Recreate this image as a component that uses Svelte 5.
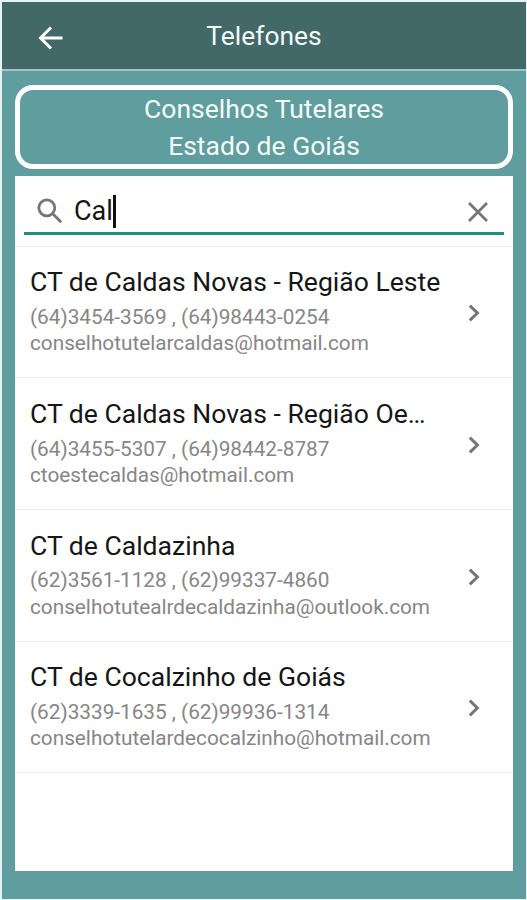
<script lang="ts">
  let query = $state('Cal');

  const contacts = [
    { name: 'CT de Caldas Novas - Região Leste', phones: '(64)3454-3569 , (64)98443-0254', email: 'conselhotutelarcaldas@hotmail.com' },
    { name: 'CT de Caldas Novas - Região Oe…', phones: '(64)3455-5307 , (64)98442-8787', email: 'ctoestecaldas@hotmail.com' },
    { name: 'CT de Caldazinha', phones: '(62)3561-1128 , (62)99337-4860', email: 'conselhotutealrdecaldazinha@outlook.com' },
    { name: 'CT de Cocalzinho de Goiás', phones: '(62)3339-1635 , (62)99936-1314', email: 'conselhotutelardecocalzinho@hotmail.com' },
  ];

  const shown = $derived(contacts.filter((c) => c.name.toLowerCase().includes(query.toLowerCase())));
</script>

<div class="screen">
  <header class="bar">
    <button class="back" aria-label="Voltar">
      <svg width="26" height="26" viewBox="0 0 26 26">
        <path d="M24.5 13H3M13 2.5 2.5 13 13 23.5" />
      </svg>
    </button>
    <h1>Telefones</h1>
  </header>

  <main>
    <div class="banner">
      <div>Conselhos Tutelares</div>
      <div>Estado de Goiás</div>
    </div>

    <section class="panel">
      <div class="search">
        <div class="field">
          <svg class="lens" width="26" height="26" viewBox="0 0 26 26">
            <circle cx="9.8" cy="9.8" r="8" />
            <path d="m15.5 15.5 8.7 8.7" />
          </svg>
          <span class="query">{query}</span>
          <span class="caret"></span>
          <button class="clear" aria-label="Limpar" onclick={() => (query = '')}>
            <svg width="20" height="20" viewBox="0 0 20 20">
              <path d="m1 1 18 18M19 1 1 19" />
            </svg>
          </button>
        </div>
      </div>

      <ul>
        {#each shown as c}
          <li>
            <div class="body">
              <div class="name">{c.name}</div>
              <div class="line">{c.phones}</div>
              <div class="line">{c.email}</div>
            </div>
            <svg class="chevron" width="12" height="18" viewBox="0 0 12 18">
              <path d="m1.8 1.6 7.6 7.4-7.6 7.4" />
            </svg>
          </li>
        {/each}
      </ul>
    </section>
  </main>
</div>

<style>
  :global(body) { background: #e6f3f4; }

  .screen {
    box-sizing: border-box; width: 527px; height: 900px; padding: 2px 1px 1px 2px;
    display: flex; flex-direction: column; font-family: Roboto, sans-serif;
  }
  button { padding: 0; border: none; background: none; display: flex; cursor: pointer; }
  svg { display: block; fill: none; stroke: #757575; flex: none; }

  .bar {
    height: 67px; background: #426868; border-bottom: 2px solid #a3c5c6;
    display: grid; grid-template-columns: 60px 1fr 60px; align-items: center;
  }
  .back { margin: 5px 0 0 36px; }
  .back svg { stroke: #fff; stroke-width: 3; }
  h1 { margin: 0; font-size: 26.4px; font-weight: 400; line-height: 30px; color: #f3f8f8; text-align: center; }

  main { flex: 1; background: #609d9e; padding: 14px 13px 28px; display: flex; flex-direction: column; gap: 7px; }
  .banner {
    box-sizing: border-box; height: 84px; border: 5px solid #fff; border-radius: 18px;
    color: #f4fbfb; font-size: 26.5px; line-height: 37px; text-align: center;
  }

  .panel { flex: 1; background: #fff; }
  .search { height: 70px; padding: 0 9px; border-bottom: 1px solid #ececec; }
  .field { box-sizing: border-box; height: 59px; padding: 14px 16px 0 12px; border-bottom: 3px solid #1c8c84; display: flex; align-items: center; }
  .lens { stroke-width: 2.8; margin-left: 0.5px; }
  .query { margin-left: 11.5px; font-size: 27px; line-height: 32px; color: #161616; }
  .caret { width: 3px; height: 33px; background: #111; }
  .clear { margin: 1px 0 0 auto; }
  .clear svg { stroke-width: 2.8; }

  ul { list-style: none; margin: -0.4px 0 0; padding: 0; }
  li {
    box-sizing: border-box; height: 131.7px; padding: 17.8px 33px 0 15px; border-bottom: 1px solid #ececec;
    display: flex;
  }
  .body { flex: 1; min-width: 0; padding-right: 18px; }
  .name { margin-bottom: 3.5px; font-size: 26.56px; line-height: 36px; color: #161616; white-space: nowrap; overflow: hidden; text-overflow: ellipsis; }
  .line { font-size: 20.75px; line-height: 26.4px; color: #868686; white-space: nowrap; }
  .chevron { margin-top: 39.8px; stroke-width: 3; }
</style>
